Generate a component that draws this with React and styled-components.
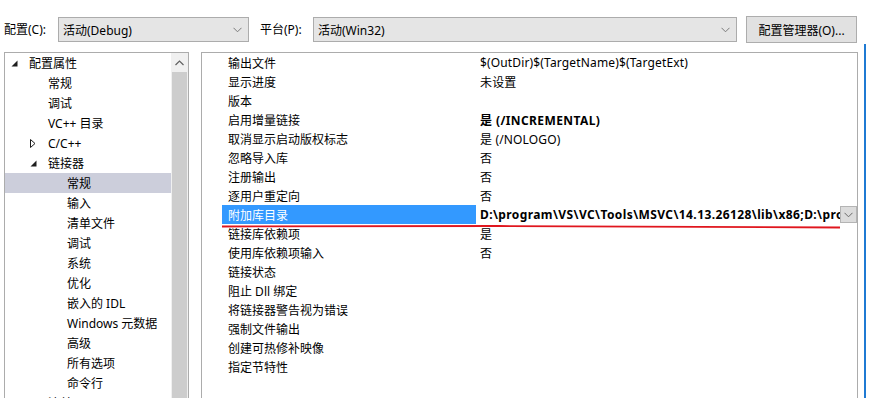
import React from "react";
import styled, { createGlobalStyle } from "styled-components";

const Global = createGlobalStyle`
  html, body { margin: 0; padding: 0; background: #fff; }
  body {
    width: 869px; height: 398px; overflow: hidden;
    font-family: "Segoe UI", "Noto Sans", "Noto Sans CJK SC", sans-serif;
    font-size: 12px; color: #000;
  }
`;

const Page = styled.div`
  position: relative;
  width: 869px;
  height: 398px;
  overflow: hidden;
`;

const TopBar = styled.div`
  display: flex;
  align-items: center;
  padding: 16px 0 0 4px;
  height: 27px;
`;

const FieldLabel = styled.span`
  width: ${(p) => p.$w}px;
  margin-left: ${(p) => p.$ml || 0}px;
  line-height: 16px;
  white-space: nowrap;
`;

const Combo = styled.div`
  box-sizing: border-box;
  width: ${(p) => p.$w}px;
  height: 25px;
  background: #e5e5e5;
  border: 1px solid #acacac;
  display: flex;
  align-items: center;
  justify-content: space-between;
  padding: 0 6px 0 4px;
`;

const Button = styled.div`
  box-sizing: border-box;
  margin-left: 9px;
  width: 111px;
  height: 27px;
  background: #e1e1e1;
  border: 1px solid #adadad;
  display: flex;
  align-items: center;
  justify-content: center;
`;

const Chevron = ({ color = "#7a7a7a" }) => (
  <svg width="9" height="6" viewBox="0 0 9 6">
    <path d="M0.5 0.8 L4.5 4.8 L8.5 0.8" fill="none" stroke={color} strokeWidth="1" />
  </svg>
);

const Body = styled.div`
  display: flex;
  align-items: flex-start;
  margin-top: 9px;
  padding-left: 4px;
`;

const TreePanel = styled.div`
  display: flex;
  width: 185px;
  height: 400px;
  box-sizing: border-box;
  border: 1px solid #acacac;
  border-bottom: none;
`;

const TreeList = styled.div`
  flex: 1;
  display: flex;
  flex-direction: column;
`;

const TreeRow = styled.div`
  display: flex;
  align-items: center;
  height: 20px;
  flex-shrink: 0;
  padding-left: ${(p) => p.$level * 19 + 4}px;
  background: ${(p) => (p.$selected ? "#cccedb" : "transparent")};
  white-space: nowrap;
`;

const Toggle = styled.span`
  width: 20px;
  height: 20px;
  display: flex;
  align-items: center;
  padding-left: 2px;
  box-sizing: border-box;
`;

const Expanded = () => (
  <svg width="7" height="7" viewBox="0 0 7 7">
    <path d="M6.5 0.5 L6.5 6.5 L0.5 6.5 Z" fill="#1e1e1e" />
  </svg>
);

const Collapsed = () => (
  <svg width="6" height="9" viewBox="0 0 6 9">
    <path d="M0.5 0.5 L5 4.5 L0.5 8.5 Z" fill="none" stroke="#1e1e1e" strokeWidth="1" />
  </svg>
);

const ScrollBar = styled.div`
  width: 17px;
  display: flex;
  flex-direction: column;
  align-items: center;
  background: #f0f0f0;
`;

const ScrollArrow = styled.div`
  height: 19px;
  display: flex;
  align-items: center;
  justify-content: center;
`;

const Thumb = styled.div`
  width: 15px;
  flex: 1;
  background: #cdcdcd;
`;

const PropPanel = styled.div`
  margin-left: 12px;
  width: 657px;
  height: 400px;
  box-sizing: border-box;
  border: 1px solid #acacac;
  border-bottom: none;
  padding-left: 20px;
  display: flex;
  flex-direction: column;
`;

const PropRow = styled.div`
  display: flex;
  height: 19px;
  align-items: stretch;
  flex-shrink: 0;
`;

const NameCell = styled.div`
  width: 254px;
  padding-left: 6px;
  box-sizing: border-box;
  display: flex;
  align-items: center;
  background: ${(p) => (p.$selected ? "#3399ff" : "transparent")};
  color: ${(p) => (p.$selected ? "#fff" : "#000")};
  white-space: nowrap;
`;

const ValueCell = styled.div`
  flex: 1;
  min-width: 0;
  display: flex;
  align-items: center;
  padding-left: 4px;
  font-weight: ${(p) => (p.$bold ? 700 : 400)};
  letter-spacing: ${(p) => (p.$bold ? "0.4px" : "0.15px")};
  white-space: nowrap;
`;

const ValueText = styled.span`
  flex: 1;
  overflow: hidden;
  white-space: nowrap;
`;

const DropButton = styled.div`
  width: 17px;
  height: 17px;
  box-sizing: border-box;
  background: #dcdcdc;
  border: 1px solid #b4b4b4;
  display: flex;
  align-items: center;
  justify-content: center;
`;

const EdgeLine = styled.div`
  position: absolute;
  top: 44px;
  bottom: 0;
  left: 864px;
  width: 2px;
  background: #1f7ad3;
`;

const Annotation = styled.svg`
  position: absolute;
  left: 0;
  top: 0;
  pointer-events: none;
`;

const tree = [
  { label: "配置属性", level: 0, toggle: "open" },
  { label: "常规", level: 1 },
  { label: "调试", level: 1 },
  { label: "VC++ 目录", level: 1 },
  { label: "C/C++", level: 1, toggle: "closed" },
  { label: "链接器", level: 1, toggle: "open" },
  { label: "常规", level: 2, selected: true },
  { label: "输入", level: 2 },
  { label: "清单文件", level: 2 },
  { label: "调试", level: 2 },
  { label: "系统", level: 2 },
  { label: "优化", level: 2 },
  { label: "嵌入的 IDL", level: 2 },
  { label: "Windows 元数据", level: 2 },
  { label: "高级", level: 2 },
  { label: "所有选项", level: 2 },
  { label: "命令行", level: 2 },
  { label: "清单工具", level: 1, toggle: "closed" },
];

const props = [
  ["输出文件", "$(OutDir)$(TargetName)$(TargetExt)"],
  ["显示进度", "未设置"],
  ["版本", ""],
  ["启用增量链接", "是 (/INCREMENTAL)", true],
  ["取消显示启动版权标志", "是 (/NOLOGO)"],
  ["忽略导入库", "否"],
  ["注册输出", "否"],
  ["逐用户重定向", "否"],
  ["附加库目录", "D:\\program\\VS\\VC\\Tools\\MSVC\\14.13.26128\\lib\\x86;D:\\program\\VS\\VC\\Tools", true, true],
  ["链接库依赖项", "是"],
  ["使用库依赖项输入", "否"],
  ["链接状态", ""],
  ["阻止 Dll 绑定", ""],
  ["将链接器警告视为错误", ""],
  ["强制文件输出", ""],
  ["创建可热修补映像", ""],
  ["指定节特性", ""],
];

export default function App() {
  return (
    <Page>
      <Global />
      <TopBar>
        <FieldLabel $w={54}>配置(C):</FieldLabel>
        <Combo $w={191}>
          <span>活动(Debug)</span>
          <Chevron />
        </Combo>
        <FieldLabel $w={53} $ml={11}>平台(P):</FieldLabel>
        <Combo $w={424}>
          <span>活动(Win32)</span>
          <Chevron />
        </Combo>
        <Button>配置管理器(O)...</Button>
      </TopBar>
      <Body>
        <TreePanel>
          <TreeList>
            {tree.map((t, i) => (
              <TreeRow key={i} $level={t.level} $selected={t.selected}>
                <Toggle>
                  {t.toggle === "open" && <Expanded />}
                  {t.toggle === "closed" && <Collapsed />}
                </Toggle>
                {t.label}
              </TreeRow>
            ))}
          </TreeList>
          <ScrollBar>
            <ScrollArrow>
              <svg width="9" height="6" viewBox="0 0 9 6">
                <path d="M0.5 5 L4.5 1 L8.5 5" fill="none" stroke="#606060" strokeWidth="1.2" />
              </svg>
            </ScrollArrow>
            <Thumb />
          </ScrollBar>
        </TreePanel>
        <PropPanel>
          {props.map(([name, value, bold, selected], i) => (
            <PropRow key={i}>
              <NameCell $selected={selected}>{name}</NameCell>
              <ValueCell $bold={bold}>
                <ValueText>{value}</ValueText>
                {selected && (
                  <DropButton>
                    <Chevron color="#6a6a6a" />
                  </DropButton>
                )}
              </ValueCell>
            </PropRow>
          ))}
        </PropPanel>
      </Body>
      <EdgeLine />
      <Annotation width="869" height="398" viewBox="0 0 869 398">
        <path d="M222 226.5 C 420 225.5, 650 226, 840 227.5" fill="none" stroke="#e0161e" strokeWidth="1.8" />
      </Annotation>
    </Page>
  );
}
